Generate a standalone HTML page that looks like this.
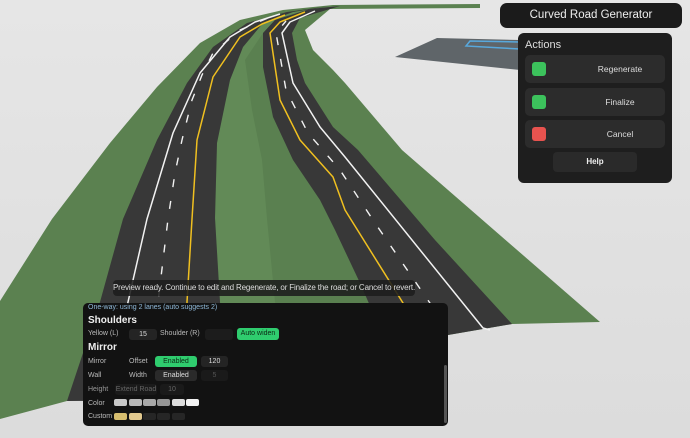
<!DOCTYPE html>
<html><head><meta charset="utf-8"><style>
*{margin:0;padding:0;box-sizing:border-box}
body{width:690px;height:438px;overflow:hidden;background:#e2e2e2;font-family:"Liberation Sans",sans-serif;position:relative}
.abs{position:absolute}
.title{left:500px;top:3px;width:182px;height:25px;background:#1b1b1b;border-radius:7px;color:#eee;font-size:11.5px;text-align:center;line-height:25px}
.act{left:518px;top:33px;width:154px;height:150px;background:#1e1e1e;border-radius:6px}
.act .h{position:absolute;left:7px;top:6px;color:#ddd;font-size:11px}
.btn{position:absolute;left:7px;width:140px;height:28px;background:#2c2c2c;border-radius:5px;color:#ddd;font-size:8.5px;line-height:28px}
.btn i{position:absolute;left:7px;top:7px;width:14px;height:14px;border-radius:3px}
.btn span{position:absolute;left:50px;right:0;text-align:center}
.help{position:absolute;left:35px;top:119px;width:84px;height:20px;background:#2a2a2a;border-radius:4px;color:#eee;font-size:8px;font-weight:bold;text-align:center;line-height:20px}
.tip{left:113px;top:280px;width:302px;height:16px;background:rgba(28,28,28,.88);border-radius:4px;color:#ddd;font-size:8px;letter-spacing:-0.15px;line-height:16px;text-align:center;white-space:nowrap;overflow:hidden}
.panel{left:83px;top:303px;width:365px;height:123px;background:#121212;border-radius:5px;color:#ccc;font-size:7px}
.panel div{position:absolute}
.lb{color:#bbb}
.in{background:#242424;border-radius:3px;text-align:center;line-height:11px;height:11px;color:#ddd}
.gr{background:#2fcc6e;color:#0d2a16;border-radius:3px;text-align:center;line-height:11px;height:11px}
.sw{width:13px;height:7px;border-radius:2px}
</style></head><body>
<svg class="abs" style="left:0;top:0" width="690" height="438" viewBox="0 0 690 438">
<defs><linearGradient id="bg" x1="0" y1="0" x2="0" y2="1"><stop offset="0" stop-color="#e6e6e6"/><stop offset="1" stop-color="#dcdcdc"/></linearGradient></defs>
<rect width="690" height="438" fill="url(#bg)"/>
<polygon points="395,57 437,38 520,40 520,70" fill="#5f6569"/>
<polyline points="520,42 470,41 466,46 520,49" fill="none" stroke="#58a8dc" stroke-width="1.5"/>
<path d="M0,301 L52,219 L110,143 L157,87 L200,43 L240,20 L283,10 L333,5 L480,4 L480,8 L330,9 L305,30 L313,50 L333,70 L345,83 L402,150 L600,322 L512,324 L448,335 L67,401 L0,419 Z" fill="#5b8150"/>
<path d="M215,218 L217,143 L230,80 L243,47 L263,23 L293,12 L305,10 L275,20 L263,33 L263,67 L273,117 L293,160 L320,200 L335,230 L360,283 L385,338 L230,350 L220,302 Z" fill="#628a57"/>
<path d="M245,60 L252,110 L262,160 L267,219 L275,302 L290,345 L385,338 L360,283 L335,230 L320,200 L293,160 L273,117 L263,67 L263,33 Z" fill="#5a8050"/>
<path d="M67,401 L100,302 L123,219 L157,140 L187,83 L213,47 L247,23 L287,12 L330,6 L305,10 L293,12 L263,23 L243,47 L230,80 L217,143 L215,218 L220,302 L226,400 Z" fill="#383838"/>
<path d="M385,340 L360,283 L335,230 L320,200 L293,160 L273,117 L263,67 L263,33 L275,20 L310,9 L340,6 L300,18 L292,33 L297,60 L305,83 L333,127 L358,150 L435,240 L512,324 L448,335 Z" fill="#383838"/>
<g fill="none" stroke-linejoin="round" stroke-linecap="butt">
<polyline points="120,340 128,302 147,219 173,133 200,73 230,37 255,22 280,14" stroke="#f2f2f2" stroke-width="1.5"/>
<polyline points="186,340 187,302 192,219 197,140 213,77 240,37 262,24 285,15" stroke="#f0c020" stroke-width="1.5"/>
<polyline points="155,340 158,302 168,219 175,173 182,140 192,100 202,75 213,53 240,30 268,18" stroke="#f2f2f2" stroke-width="1.4" stroke-dasharray="8 14"/>
<polyline points="420,338 403,303 345,210 333,177 300,140 280,100 270,33 280,22 305,12" stroke="#f0c020" stroke-width="1.5"/>
<polyline points="490,330 483,328 345,157 320,127 293,83 282,33 290,22 315,11" stroke="#f2f2f2" stroke-width="1.5"/>
<polyline points="445,325 375,223 340,170 308,133 286,90 276,33 286,21" stroke="#f2f2f2" stroke-width="1.4" stroke-dasharray="8 14"/>
</g>
</svg>
<div class="abs title">Curved Road Generator</div>
<div class="abs act"><div class="h">Actions</div>
<div class="btn" style="top:22px"><i style="background:#3cc25c"></i><span>Regenerate</span></div>
<div class="btn" style="top:55px"><i style="background:#3cc25c"></i><span>Finalize</span></div>
<div class="btn" style="top:87px"><i style="background:#e8534f"></i><span>Cancel</span></div>
<div class="help">Help</div></div>
<div class="abs tip">Preview ready. Continue to edit and Regenerate, or Finalize the road; or Cancel to revert.</div>
<div class="abs panel">
<div style="left:5px;top:1px;color:#8fb8d8;font-size:7px">One-way: using 2 lanes (auto suggests 2)</div>
<div style="left:5px;top:12px;color:#eee;font-size:10px;font-weight:bold">Shoulders</div>
<div class="lb" style="left:5px;top:27px">Yellow (L)</div>
<div class="in" style="left:46px;top:26px;width:28px">15</div>
<div class="lb" style="left:77px;top:27px">Shoulder (R)</div>
<div class="in" style="left:122px;top:26px;width:28px;background:#1c1c1c"></div>
<div class="gr" style="left:154px;top:25px;width:42px;height:12px">Auto widen</div>
<div style="left:5px;top:39px;color:#eee;font-size:10px;font-weight:bold">Mirror</div>
<div class="lb" style="left:5px;top:55px">Mirror</div>
<div class="lb" style="left:46px;top:55px">Offset</div>
<div class="gr" style="left:72px;top:53px;width:42px">Enabled</div>
<div class="in" style="left:118px;top:53px;width:27px">120</div>
<div class="lb" style="left:5px;top:69px">Wall</div>
<div class="lb" style="left:46px;top:69px">Width</div>
<div class="in" style="left:72px;top:67px;width:42px;background:#2a2a2a">Enabled</div>
<div class="in" style="left:118px;top:67px;width:27px;background:#1a1a1a;color:#555">5</div>
<div class="lb" style="left:5px;top:83px;color:#999">Height</div>
<div class="in" style="left:32px;top:81px;width:42px;background:#1a1a1a;color:#666">Extend Road</div>
<div class="in" style="left:77px;top:81px;width:24px;background:#1a1a1a;color:#666">10</div>
<div class="lb" style="left:5px;top:97px">Color</div>
<div class="sw" style="left:31px;top:96px;background:#c8c8c8"></div>
<div class="sw" style="left:46px;top:96px;background:#b8b8b8"></div>
<div class="sw" style="left:60px;top:96px;background:#a8a8a8"></div>
<div class="sw" style="left:74px;top:96px;background:#959595"></div>
<div class="sw" style="left:89px;top:96px;background:#dcdcdc"></div>
<div class="sw" style="left:103px;top:96px;background:#f2f2f2"></div>
<div class="lb" style="left:5px;top:110px">Custom</div>
<div class="sw" style="left:31px;top:110px;background:#d6bd6e"></div>
<div class="sw" style="left:46px;top:110px;background:#e2c98f"></div>
<div class="sw" style="left:60px;top:110px;background:#262626"></div>
<div class="sw" style="left:74px;top:110px;background:#262626"></div>
<div class="sw" style="left:89px;top:110px;background:#262626"></div>
<div style="left:361px;top:62px;width:3px;height:58px;background:#555;border-radius:2px"></div>
</div>
</body></html>
